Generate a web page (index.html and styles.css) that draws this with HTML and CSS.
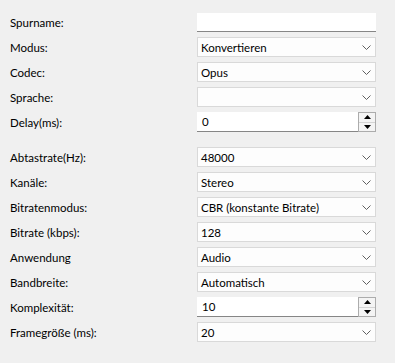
FILE: index.html
```html
<!DOCTYPE html>
<html lang="de">
<head>
<meta charset="UTF-8">
<title>Spur-Einstellungen</title>
<link rel="stylesheet" href="styles.css">
</head>
<body>
    <div class="form">
        <div class="label">Spurname:</div>
        <div class="edit"></div>

        <div class="label">Modus:</div>
        <div class="combo">Konvertieren<svg class="chev" viewBox="0 0 9 5"><path d="M0.5 0.5 L4.5 4.5 L8.5 0.5"/></svg></div>

        <div class="label">Codec:</div>
        <div class="combo">Opus<svg class="chev" viewBox="0 0 9 5"><path d="M0.5 0.5 L4.5 4.5 L8.5 0.5"/></svg></div>

        <div class="label">Sprache:</div>
        <div class="combo"><svg class="chev" viewBox="0 0 9 5"><path d="M0.5 0.5 L4.5 4.5 L8.5 0.5"/></svg></div>

        <div class="label">Delay(ms):</div>
        <div class="spin">
            <span class="spin-val">0</span>
            <div class="spin-btns">
                <div class="up"><svg viewBox="0 0 7 4"><path d="M0 4 L3.5 0 L7 4 Z"/></svg></div>
                <div class="down"><svg viewBox="0 0 7 4"><path d="M0 0 L3.5 4 L7 0 Z"/></svg></div>
            </div>
        </div>

        <!-- zweiter Block: Audio-Parameter -->
        <div class="spacer"></div>

        <div class="label">Abtastrate(Hz):</div>
        <div class="combo">48000<svg class="chev" viewBox="0 0 9 5"><path d="M0.5 0.5 L4.5 4.5 L8.5 0.5"/></svg></div>

        <div class="label">Kanäle:</div>
        <div class="combo">Stereo<svg class="chev" viewBox="0 0 9 5"><path d="M0.5 0.5 L4.5 4.5 L8.5 0.5"/></svg></div>

        <div class="label">Bitratenmodus:</div>
        <div class="combo">CBR (konstante Bitrate)<svg class="chev" viewBox="0 0 9 5"><path d="M0.5 0.5 L4.5 4.5 L8.5 0.5"/></svg></div>

        <div class="label">Bitrate (kbps):</div>
        <div class="combo">128<svg class="chev" viewBox="0 0 9 5"><path d="M0.5 0.5 L4.5 4.5 L8.5 0.5"/></svg></div>

        <div class="label">Anwendung</div>
        <div class="combo">Audio<svg class="chev" viewBox="0 0 9 5"><path d="M0.5 0.5 L4.5 4.5 L8.5 0.5"/></svg></div>

        <div class="label">Bandbreite:</div>
        <div class="combo">Automatisch<svg class="chev" viewBox="0 0 9 5"><path d="M0.5 0.5 L4.5 4.5 L8.5 0.5"/></svg></div>

        <div class="label">Komplexität:</div>
        <div class="spin">
            <span class="spin-val">10</span>
            <div class="spin-btns">
                <div class="up"><svg viewBox="0 0 7 4"><path d="M0 4 L3.5 0 L7 4 Z"/></svg></div>
                <div class="down"><svg viewBox="0 0 7 4"><path d="M0 0 L3.5 4 L7 0 Z"/></svg></div>
            </div>
        </div>

        <div class="label">Framegröße (ms):</div>
        <div class="combo">20<svg class="chev" viewBox="0 0 9 5"><path d="M0.5 0.5 L4.5 4.5 L8.5 0.5"/></svg></div>
    </div>
</body>
</html>
```

FILE: styles.css
```css
body{
    margin: 0;
    background: #f0f0f0;
    font-family: "Segoe UI", Lato, "Noto Sans", sans-serif;
    font-size: 11.5px;
    color: #000000;
}
.form{
    display: grid;
    grid-template-columns: 187px 179px;
    row-gap: 5px;
    padding: 12px 19px 0 10px;
}
.label{
    display: flex;
    align-items: center;
    height: 20px;
}
.spacer{
    grid-column: 1 / 3;
    height: 5px;
}
.edit{
    height: 19px;
    margin-top: 1px;
    background: #ffffff;
    border-bottom: 1px solid #868686;
    box-sizing: border-box;
}
.combo{
    height: 20px;
    display: flex;
    align-items: center;
    box-sizing: border-box;
    border: 1px solid #d9d9d9;
    background: #fdfdfd;
    padding: 0 4px 0 3px;
}
.chev{
    width: 9px;
    height: 5px;
    margin-left: auto;
}
.chev path{
    fill: none;
    stroke: #606060;
    stroke-width: 1;
}
.spin{
    height: 20px;
    display: flex;
    box-sizing: border-box;
    background: #ffffff;
    border-bottom: 1px solid #868686;
}
.spin-val{
    flex: 1;
    display: flex;
    align-items: center;
    padding-left: 5px;
}
.spin-btns{
    width: 18px;
    display: flex;
    flex-direction: column;
    box-sizing: border-box;
    border: 1px solid #acacac;
    background: #f4f4f4;
    margin-bottom: -1px;
}
.spin-btns div{
    flex: 1;
    display: flex;
    align-items: center;
    justify-content: center;
}
.spin-btns svg{
    width: 7px;
    height: 4px;
}
.spin-btns path{
    fill: #000000;
}
.spin-btns .up{
    border-bottom: 1px solid #d4d4d4;
}
```
